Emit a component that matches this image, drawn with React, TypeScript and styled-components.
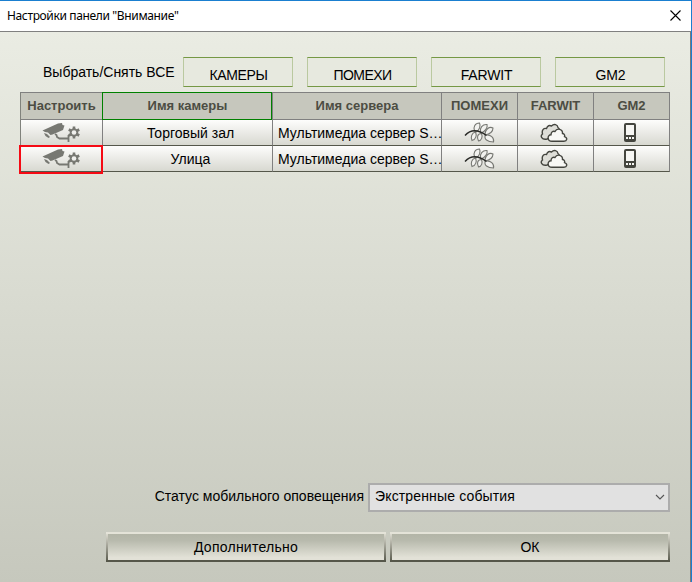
import React from "react";
import styled, { createGlobalStyle, css } from "styled-components";

const Global = createGlobalStyle`
  *, *::before, *::after { box-sizing: border-box; }
  html, body { margin: 0; padding: 0; }
  body { font-family: "Liberation Sans", Arial, sans-serif; font-size: 14px; color: #000; overflow: hidden; }
  button { font: inherit; color: inherit; margin: 0; padding: 0; }
`;

const Window = styled.div`
  width: 692px;
  height: 582px;
  display: flex;
  flex-direction: column;
  border-top: 1px solid #1a7fd0;
  border-right: 1px solid #1a7fd0;
`;

const TitleBar = styled.header`
  height: 31px;
  flex: none;
  display: flex;
  justify-content: space-between;
  padding: 0 10px 0 7px;
  background: #fff;
  border-bottom: 1px solid #808080;
`;

const Title = styled.h1`
  margin: 0;
  font: 400 12px/30px "Noto Sans", sans-serif;
  letter-spacing: -0.36px;
  white-space: nowrap;
`;

const CloseButton = styled.button`
  width: 11px;
  height: 29px;
  border: 0;
  background: none;
  display: flex;
  align-items: center;
  svg { display: block; }
`;

const Body = styled.main`
  flex: 1;
  display: flex;
  flex-direction: column;
  padding: 25px 20px 20px;
  border-right: 1px solid #7b7b7b;
  background: linear-gradient(#eaece3, #c6c8bd);
`;

const SelectAll = styled.section`
  display: flex;
  height: 30px;
  gap: 14px;
  margin-bottom: 5px;
`;

const SelectAllLabel = styled.span`
  width: 149px;
  padding-left: 23px;
  line-height: 30px;
  white-space: nowrap;
`;

const ToggleButton = styled.button<{ $spacing: number }>`
  width: 110px;
  height: 30px;
  padding: 6px 0 0 1px;
  border: 1px solid #bac9a0;
  border-top-color: #759844;
  border-bottom-color: #759844;
  background: #e7e9df;
  letter-spacing: ${(p) => p.$spacing}px;
  line-height: 20px;
`;

const columns = "82px 170px 169px 76px 76px 76px";

const Table = styled.div`
  width: 650px;
  border-left: 1px solid #80827c;
`;

const HeaderRow = styled.div`
  display: grid;
  grid-template-columns: ${columns};
  height: 28px;
  background: #c6c7bd;
`;

const HeaderCell = styled.div<{ $active?: boolean }>`
  border: 1px solid #808080;
  border-left: 0;
  text-align: center;
  font-size: 13px;
  font-weight: 700;
  line-height: 26px;
  color: #4c4d43;
  white-space: nowrap;
  ${(p) =>
    p.$active &&
    css`
      position: relative;
      &::after {
        content: "";
        position: absolute;
        inset: -1px 0 -1px -1px;
        border: 1px solid #008000;
      }
    `}
`;

const Row = styled.div<{ $selected?: boolean }>`
  display: grid;
  grid-template-columns: ${columns};
  grid-template-rows: 26px;
  height: 26px;
  position: relative;
  background: linear-gradient(#fdfdfc, #d6d7cf);
  ${(p) =>
    p.$selected &&
    css`
      &::after {
        content: "";
        position: absolute;
        left: -2px;
        top: -1px;
        width: 84px;
        height: 29px;
        border: 2px solid #f50a14;
      }
    `}
`;

const Cell = styled.div<{ $align?: "left" }>`
  min-width: 0;
  height: 26px;
  display: flex;
  justify-content: ${(p) => (p.$align ? "flex-start" : "center")};
  align-items: center;
  border-right: 1px solid #808080;
  border-bottom: 1px solid #55574b;
  padding-top: 1px;
  padding-left: ${(p) => (p.$align ? "5px" : "6px")};
  line-height: 24px;
  white-space: nowrap;
`;

const IconCell = styled(Cell)<{ $shift?: number }>`
  padding: 0 ${(p) => p.$shift ?? 0}px 0 0;
  svg { display: block; flex: none; }
`;

const Spacer = styled.div`
  flex: 1;
`;

const StatusRow = styled.label`
  display: flex;
  justify-content: flex-end;
  gap: 4px;
  height: 29px;
  margin-bottom: 20px;
`;

const StatusLabel = styled.span`
  line-height: 26px;
  white-space: nowrap;
`;

const Select = styled.span`
  width: 302px;
  height: 29px;
  display: flex;
  justify-content: space-between;
  padding: 0 3px 0 5px;
  border: 2px solid #acacac;
  background: #e1e1e1;
  line-height: 22px;
  letter-spacing: 0.15px;
  svg { display: block; margin-top: 9px; }
`;

const Actions = styled.footer`
  display: grid;
  grid-template-columns: 280px 280px;
  justify-content: end;
  gap: 4px;
`;

const ActionButton = styled.button`
  height: 30px;
  padding: 2px;
  border: 0;
  background: linear-gradient(#e4e3d8 0 2px, transparent 2px 28px, #56574a 28px),
    linear-gradient(#e4e3d8, #56574a);
`;

const ActionFace = styled.span<{ $spacing?: number }>`
  display: block;
  height: 26px;
  line-height: 26px;
  letter-spacing: ${(p) => p.$spacing ?? 0}px;
  background: linear-gradient(#b3b5a7, #b8baad 25%, #e2e1d7 90%);
`;

const CameraIcon = () => (
  <svg width="39" height="21" viewBox="0 0 39 21" fill="#777872">
    <path d="M.5 8.500 16 1.500 20 1 20.500 3 22.500 3.500 21 8 10.500 12.500 8.500 13 6 10.500 3 10Z" />
    <path d="M2 11 5 12 8 15 6.500 16 3.500 14Z" />
    <path d="M13 12l1.500 1 .5 2 2.500 1.500H26M26.500 13v7" fill="none" stroke="#777872" strokeWidth="1.800" />
    <path d="M32 4.500v12M26.800 7.500l10.400 6M26.800 13.500l10.400-6" stroke="#777872" strokeWidth="2.600" />
    <circle cx="32" cy="10.500" r="4.200" />
    <circle cx="32" cy="10.500" r="2.300" fill="#f0f0ed" />
  </svg>
);

const BranchIcon = () => (
  <svg width="31" height="21" viewBox="0 0 31 21" fill="#f2f2ef" stroke="#777873" strokeWidth="1.100">
    <path d="M10.500 9C9 5 11 1 15.500 1c1.500 3 0 7-3.500 9Z" />
    <path d="M16.500 10c-1-4 2-8 6.500-7.500 1 3-2 7-6 8.500Z" />
    <path d="M21 12c0-4 4-8 8-6 0 4-3 6-8 7Z" />
    <path d="M11.500 10c-4 1-5 5-3.500 8.500 4-1 5-5 3.500-8.500Z" />
    <path d="M17.500 11.500c-4 0-5 4-3 7.500 3-.5 4.500-4 3-7.500Z" />
    <path d="M21.500 13c-2 4 2 7 8 7 1-4-3-8-8-7Z" />
    <path d="M1 13.500C7 7 15 8 22.500 13.500" fill="none" stroke="#292a27" strokeWidth="1.500" />
  </svg>
);

const CloudsIcon = () => (
  <svg width="28" height="21" viewBox="0 -1 28 21" stroke="#44453f" strokeWidth="1.400">
    <path d="M7 16C1.500 17 0 13 2.500 11c-1-4 1-6 4-5.500C7.500 2.500 9.500 2 11.500 3 14 .5 17.500 1.500 18 4.500c3 2 1 8-3 9Z" fill="#deded8" />
    <path d="M12 18.300c-5 0-5-6.500-1-6.500 0-3 2-4 4-3.300 2-4 8-2.500 7.500 2 2 .3 2.500 2 2 3.200C28 15 27 18.300 24 18.300Z" fill="#f8f8f5" />
  </svg>
);

const PhoneIcon = () => (
  <svg width="12" height="19" viewBox="0 0 12 19">
    <rect width="12" height="19" rx="2" fill="#44453e" />
    <rect x="2" y="2" width="8" height="10" fill="#f6f6f3" />
    <path d="M2 14h2v2H2zM5 14h2v2H5zM8 14h2v2H8z" fill="#f6f6f3" />
  </svg>
);

const toggles = [
  { label: "КАМЕРЫ", spacing: -0.4 },
  { label: "ПОМЕХИ", spacing: -0.55 },
  { label: "FARWIT", spacing: -0.15 },
  { label: "GM2", spacing: -0.1 },
];
const headers = ["Настроить", "Имя камеры", "Имя сервера", "ПОМЕХИ", "FARWIT", "GM2"];
const cameras = ["Торговый зал", "Улица"];

export default function App() {
  return (
    <Window>
      <Global />
      <TitleBar>
        <Title>Настройки панели "Внимание"</Title>
        <CloseButton aria-label="Закрыть">
          <svg width="11" height="11" viewBox="0 0 11 11" stroke="#000" strokeWidth="1.100">
            <path d="M.5.5l10 10M10.500.5l-10 10" />
          </svg>
        </CloseButton>
      </TitleBar>
      <Body>
        <SelectAll>
          <SelectAllLabel>Выбрать/Снять ВСЕ</SelectAllLabel>
          {toggles.map((t) => (
            <ToggleButton key={t.label} $spacing={t.spacing}>{t.label}</ToggleButton>
          ))}
        </SelectAll>
        <Table>
          <HeaderRow>
            {headers.map((h, i) => (
              <HeaderCell key={h} $active={i === 1}>{h}</HeaderCell>
            ))}
          </HeaderRow>
          {cameras.map((name, i) => (
            <Row key={name} $selected={i === 1}>
              <IconCell $shift={1}><CameraIcon /></IconCell>
              <Cell>{name}</Cell>
              <Cell $align="left">Мультимедиа сервер S…</Cell>
              <IconCell><BranchIcon /></IconCell>
              <IconCell $shift={3}><CloudsIcon /></IconCell>
              <IconCell $shift={3}><PhoneIcon /></IconCell>
            </Row>
          ))}
        </Table>
        <Spacer />
        <StatusRow>
          <StatusLabel>Статус мобильного оповещения</StatusLabel>
          <Select>
            Экстренные события
            <svg width="10" height="7" viewBox="0 0 10 7" fill="none" stroke="#555" strokeWidth="1.100">
              <path d="M1 1l4 4 4-4" />
            </svg>
          </Select>
        </StatusRow>
        <Actions>
          <ActionButton><ActionFace $spacing={0.25}>Дополнительно</ActionFace></ActionButton>
          <ActionButton><ActionFace>ОК</ActionFace></ActionButton>
        </Actions>
      </Body>
    </Window>
  );
}
